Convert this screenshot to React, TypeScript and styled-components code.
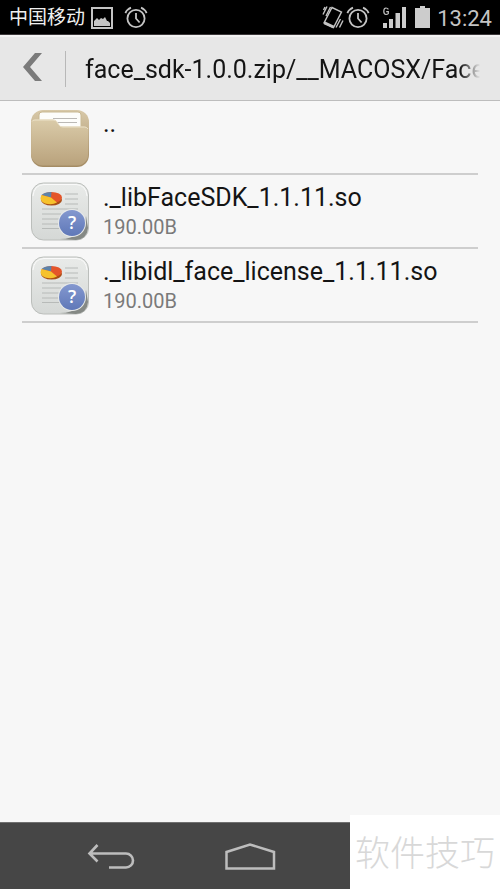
import React from "react";
import styled, { createGlobalStyle } from "styled-components";

const GlobalStyle = createGlobalStyle`
  * { box-sizing: border-box; }
  body {
    margin: 0;
    background: #f7f7f7;
    font-family: Roboto, "Noto Sans CJK SC", sans-serif;
    color: #141414;
  }
`;

const Screen = styled.div`
  position: relative;
  display: flex;
  flex-direction: column;
  min-height: 100vh;
`;

const StatusBar = styled.div`
  display: flex;
  align-items: center;
  justify-content: space-between;
  height: 35px;
  padding: 0 8px 0 9px;
  background: #000;
  border-bottom: 1px solid #3c383a;
  color: #c4c4c4;
`;

const StatusGroup = styled.div`
  display: flex;
  align-items: center;
`;

const Carrier = styled.span`
  margin-right: 6px;
  padding-top: 2px;
  font-size: 19px;
  line-height: 32px;
  color: #f0f0f0;
`;

const Clock = styled.span`
  margin-left: 7px;
  padding-top: 4px;
  font-size: 22px;
  line-height: 30px;
`;

const StatusIcon = styled.svg<{ $gap?: number }>`
  display: block;
  flex: none;
  margin-left: ${(p) => p.$gap ?? 0}px;
`;

const Header = styled.header`
  display: flex;
  align-items: center;
  height: 66px;
  padding-right: 20px;
  background: #e7e7e7;
  border-top: 2px solid #f3f3f3;
  border-bottom: 1px solid #bdbdbd;
`;

const BackButton = styled.button`
  flex: none;
  width: 65px;
  height: 100%;
  padding: 0 0 0 22px;
  border: 0;
  background: none;
  text-align: left;
`;

const Divider = styled.span`
  flex: none;
  width: 1px;
  height: 36px;
  margin-right: 19px;
  background: #b8b8b8;
`;

const Title = styled.h1`
  flex: 1;
  min-width: 0;
  margin: 0;
  padding-top: 2px;
  overflow: hidden;
  font-size: 25px;
  font-weight: 400;
  line-height: 34px;
  white-space: nowrap;
  mask-image: linear-gradient(to left, transparent, #000 20px);
`;

const FileList = styled.ul`
  flex: 1;
  margin: 0;
  padding: 0 22px;
  list-style: none;
`;

const FileRow = styled.li`
  border-bottom: 2px solid #cecece;
`;

const FileButton = styled.button`
  display: flex;
  align-items: flex-start;
  width: 100%;
  height: 72px;
  padding: 7px 0 0 8px;
  border: 0;
  background: none;
  color: inherit;
  font: inherit;
  text-align: left;
`;

const FileText = styled.span`
  display: flex;
  flex-direction: column;
  margin-left: 13px;
`;

const FileName = styled.span`
  font-size: 25px;
  line-height: 32px;
`;

const FileSize = styled.span`
  font-size: 20px;
  line-height: 26px;
  color: #7a7a7a;
`;

const NavBar = styled.nav`
  display: flex;
  align-items: center;
  height: 67px;
  padding: 3px 0 0 85px;
  background: #464646;
  border-top: 1px solid #707070;
`;

const NavButton = styled.button`
  padding: 0;
  margin-right: 84px;
  border: 0;
  background: none;
  line-height: 0;
`;

const Watermark = styled.div`
  position: absolute;
  right: 0;
  bottom: 0;
  width: 150px;
  height: 74px;
  padding-left: 5px;
  background: #fff;
  color: #d8d8d8;
  font-family: "Noto Sans CJK SC", sans-serif;
  font-size: 35px;
  font-weight: 300;
  line-height: 72px;
  white-space: nowrap;
`;

function AlarmIcon({ gap }: { gap: number }) {
  return (
    <StatusIcon $gap={gap} width="24" height="24" viewBox="0 0 24 24" fill="none" stroke="#c4c4c4" strokeWidth="1.8" aria-hidden>
      <circle cx="12" cy="13.5" r="8.6" />
      <path d="M12 8V13.500l3.600 4M1.400 8.200Q3 4.200 7 2.600M22.600 8.200Q21 4.200 17 2.600" />
    </StatusIcon>
  );
}

function PictureIcon() {
  return (
    <StatusIcon width="22" height="24" viewBox="0 0 22 24" aria-hidden>
      <rect x="1" y="3" width="20" height="20" fill="none" stroke="#c4c4c4" strokeWidth="2" />
      <path d="M3 21v-5l3-3 2 2 2-2 2 1 2-2 2 4h1l2 2v3z" fill="#c4c4c4" />
    </StatusIcon>
  );
}

function VibrateIcon() {
  return (
    <StatusIcon width="22" height="26" viewBox="0 0 22 26" fill="none" stroke="#c4c4c4" strokeWidth="1.4" aria-hidden>
      <path d="M10 3.5 19.5 8 11.5 23.5 2 19z" />
      <path d="M2.5 18.8 11.5 23" strokeWidth="3" />
      <path d="M1 10.5 5 2.5M4 12 8.5 3M1.5 6 3 3M14 23.5 18.5 15M17.5 23.5 21 16.5" />
    </StatusIcon>
  );
}

function SignalIcon() {
  return (
    <StatusIcon $gap={12} width="26" height="24" viewBox="0 0 26 24" fill="#cccccc" aria-hidden>
      <path d="M1 18h4v5H1zM7 14h4v9H7zM13.500 8h4.500v15h-4.500zM20 2h4v21h-4z" />
      <path d="M6.400 4.400Q5.500 3 4 3 1.800 3 1.800 6.200T4 9.500Q5.500 9.500 6.300 8.600V6.700H4.200" fill="none" stroke="#c4c4c4" strokeWidth="1.200" />
    </StatusIcon>
  );
}

function BatteryIcon() {
  return (
    <StatusIcon $gap={7} width="15" height="24" viewBox="0 0 15 24" aria-hidden>
      <path d="M5 1h5v2h5v20H0V3h5z" fill="#cccccc" />
    </StatusIcon>
  );
}

function FolderIcon() {
  return (
    <svg width="60" height="60" viewBox="0 0 60 60" aria-hidden>
      <defs>
        <linearGradient id="folderBack" x2="0" y2="1">
          <stop stopColor="#d8c9a9" />
          <stop offset="1" stopColor="#a48b63" />
        </linearGradient>
        <linearGradient id="folderFront" x2="0" y2="1">
          <stop stopColor="#dacba9" />
          <stop offset="1" stopColor="#b9a27c" />
        </linearGradient>
      </defs>
      <rect x="1" y="2" width="58" height="57" rx="12" fill="url(#folderBack)" />
      <rect x="9" y="4" width="42" height="24" rx="3" fill="#fdfdfb" stroke="#c9b993" />
      <path d="M23 10.500h24M26 14.500h21" stroke="#bbb9b6" />
      <path d="M1.500 14Q2 11.500 5 11.500h18q2.500 0 4 2l1.500 2.500q1.500 2.500 4 2.500h22q3 0 3.500 3v25a11 11 0 0 1-11 11h-34a12 12 0 0 1-12-12z" fill="url(#folderFront)" />
      <path d="M2 13.500Q2.500 12 5 12h18q2.500 0 4 2l1.500 2.500q1.500 2.500 4 2.500h22q2.500 0 3.500 2" fill="none" stroke="#ebe1c8" />
    </svg>
  );
}

function UnknownFileIcon() {
  return (
    <svg width="60" height="60" viewBox="0 0 60 60" aria-hidden>
      <defs>
        <linearGradient id="paper" x2="0" y2="1">
          <stop stopColor="#e9ebe9" />
          <stop offset="1" stopColor="#d5d8d6" />
        </linearGradient>
        <linearGradient id="badge" x2="0" y2="1">
          <stop stopColor="#8498cf" />
          <stop offset="1" stopColor="#5f78b8" />
        </linearGradient>
      </defs>
      <rect x="1.500" y="1" width="57" height="57" rx="12" fill="url(#paper)" stroke="#bbbebb" />
      <path d="M3 14Q4 3 14 2.500h32Q56 3 57 14" fill="none" stroke="#fafafa" />
      <path d="M35 12h13M35 17h13M35 22h13M12 27h36M12 32h19M12 37h17M12 42h17M12 46.500h18" stroke="#b7bab8" />
      <ellipse cx="21.500" cy="18" rx="10.500" ry="5.500" fill="#a84f16" />
      <ellipse cx="21.500" cy="15.500" rx="10.500" ry="5.500" fill="#e4552a" />
      <path d="M21 15.500 11.500 13A12 5.500 0 0 1 21.500 10z" fill="#5d83a9" />
      <path d="M21 15.500 11.500 13q-3 6 3.500 8.500 7 2 12-1z" fill="#f6c22d" />
      <path d="M30 57Q54 57 56 34L58 46Q57 57 46 58z" fill="#858985" />
      <circle cx="42" cy="41" r="14" fill="#e8eae9" />
      <circle cx="42" cy="41" r="13" fill="url(#badge)" />
      <text x="42" y="47" fill="#fff" fontFamily="Open Sans, sans-serif" fontSize="18" fontWeight="600" textAnchor="middle">?</text>
    </svg>
  );
}

const files = [
  { name: "..", folder: true },
  { name: "._libFaceSDK_1.1.11.so", size: "190.00B" },
  { name: "._libidl_face_license_1.1.11.so", size: "190.00B" },
];

export default function App() {
  return (
    <>
      <GlobalStyle />
      <Screen>
        <StatusBar>
          <StatusGroup>
            <Carrier>中国移动</Carrier>
            <PictureIcon />
            <AlarmIcon gap={11} />
          </StatusGroup>
          <StatusGroup>
            <VibrateIcon />
            <AlarmIcon gap={2} />
            <SignalIcon />
            <BatteryIcon />
            <Clock>13:24</Clock>
          </StatusGroup>
        </StatusBar>
        <Header>
          <BackButton aria-label="Back">
            <svg width="20" height="28" viewBox="0 0 20 28" aria-hidden>
              <path d="M13 0h7L8 14l12 14h-7L1 14z" fill="#7b7b7b" />
            </svg>
          </BackButton>
          <Divider />
          <Title>face_sdk-1.0.0.zip/__MACOSX/Face</Title>
        </Header>
        <FileList>
          {files.map((file) => (
            <FileRow key={file.name}>
              <FileButton>
                {file.folder ? <FolderIcon /> : <UnknownFileIcon />}
                <FileText>
                  <FileName>{file.name}</FileName>
                  {file.size && <FileSize>{file.size}</FileSize>}
                </FileText>
              </FileButton>
            </FileRow>
          ))}
        </FileList>
        <NavBar>
          <NavButton aria-label="Back">
            <svg width="54" height="30" viewBox="0 0 54 30" fill="none" stroke="#bdbdbd" strokeWidth="2.600" aria-hidden>
              <path d="M12.500 2 4.500 10.500l8 8M4.500 10.500H41a7 7 0 0 1 0 14H24" />
            </svg>
          </NavButton>
          <NavButton aria-label="Home">
            <svg width="54" height="30" viewBox="0 0 54 30" fill="none" stroke="#bdbdbd" strokeWidth="2.500" aria-hidden>
              <path d="M3.500 25.500V9L27 1.500 51 9v16.500z" />
            </svg>
          </NavButton>
        </NavBar>
        <Watermark>软件技巧</Watermark>
      </Screen>
    </>
  );
}
